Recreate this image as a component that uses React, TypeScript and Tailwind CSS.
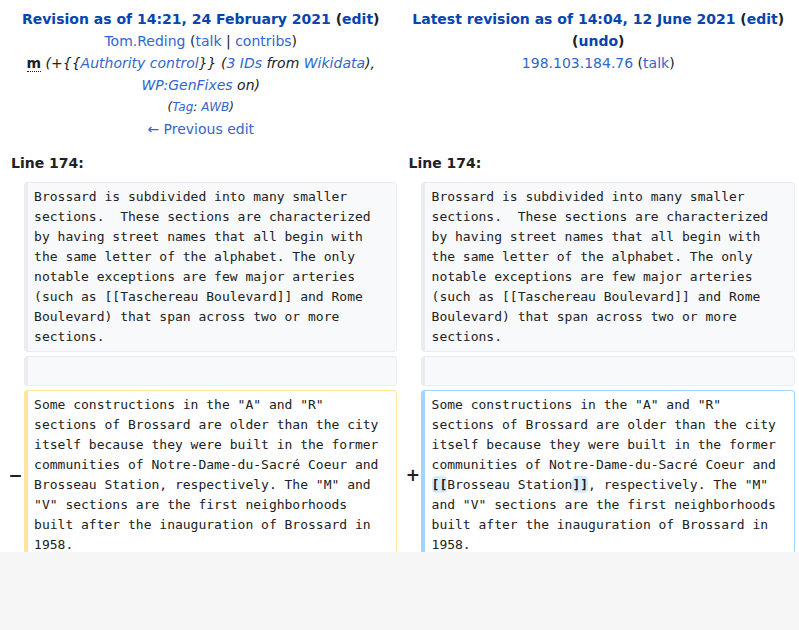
const link = "text-[#3366cc]"

function Marker({ sign }: { sign?: string }) {
  return (
    <td className="align-middle text-right font-bold text-[17px] leading-[1.2] text-[#202122] font-['DejaVu_Sans',sans-serif]">
      <span className="relative left-[3px]">{sign}</span>
    </td>
  )
}

function Cell({ kind, children }: { kind: "context" | "del" | "add"; children?: React.ReactNode }) {
  const tone =
    kind === "context"
      ? "bg-[#f8f9fa] border-[#eaecf0]"
      : kind === "del"
        ? "bg-white border-[#ffe49c]"
        : "bg-white border-[#a3d3ff]"
  return (
    <td
      className={`${tone} align-top border border-l-4 rounded-[4px] px-[6.5px] py-[4px] font-['DejaVu_Sans_Mono',monospace] text-[13px] leading-[20px] text-[#202122] whitespace-pre-wrap break-words`}
    >
      {children ?? <br />}
    </td>
  )
}

const contextText =
  "Brossard is subdivided into many smaller sections.  These sections are characterized by having street names that all begin with the same letter of the alphabet. The only notable exceptions are few major arteries (such as [[Taschereau Boulevard]] and Rome Boulevard) that span across two or more sections."

export default function App() {
  return (
    <div className="min-h-screen bg-[#f6f6f6]">
      <div className="h-[552px] overflow-hidden bg-white">
        <table className="w-full table-fixed border-separate border-spacing-[4px] font-['DejaVu_Sans',sans-serif] text-[#202122]">
          <colgroup>
            <col className="w-[2%]" />
            <col className="w-[48%]" />
            <col className="w-[2%]" />
            <col className="w-[48%]" />
          </colgroup>
          <tbody>
            <tr className="text-[14px] leading-[22px]">
              <td colSpan={2} className="align-top text-center py-[4px]">
                <div className="font-bold">
                  <a className="text-[#0645ad]">Revision as of 14:21, 24 February 2021</a> (
                  <a className="text-[#0645ad]">edit</a>)
                </div>
                <div>
                  <a className={link}>Tom.Reding</a> (<a className={link}>talk</a> |{" "}
                  <a className={link}>contribs</a>)
                </div>
                <div>
                  <abbr className="font-bold no-underline border-b border-dotted border-[#202122]">m</abbr>{" "}
                  <span className="italic text-[#202122]">
                    (+&#123;&#123;<a className={link}>Authority control</a>&#125;&#125; (
                    <a className={link}>3 IDs</a> from <a className={link}>Wikidata</a>),{" "}
                    <a className={link}>WP:GenFixes</a> on)
                  </span>
                </div>
                <div className="italic text-[12px]">
                  (<a className={link}>Tag</a>: <a className={link}>AWB</a>)
                </div>
                <div>
                  <a className={link}>← Previous edit</a>
                </div>
              </td>
              <td colSpan={2} className="align-top text-center py-[4px]">
                <div className="font-bold">
                  <a className="text-[#0645ad]">Latest revision as of 14:04, 12 June 2021</a> (
                  <a className="text-[#0645ad]">edit</a>) (<a className="text-[#0645ad]">undo</a>)
                </div>
                <div>
                  <a className={link}>198.103.184.76</a> (<a className={link}>talk</a>)
                </div>
              </td>
            </tr>
            <tr className="text-[14px] leading-[22px] font-bold">
              <td colSpan={2} className="px-[7px] py-[4px] text-left">
                Line 174:
              </td>
              <td colSpan={2} className="px-[7px] py-[4px] text-left">
                Line 174:
              </td>
            </tr>
            <tr>
              <Marker />
              <Cell kind="context">{contextText}</Cell>
              <Marker />
              <Cell kind="context">{contextText}</Cell>
            </tr>
            <tr>
              <Marker />
              <Cell kind="context" />
              <Marker />
              <Cell kind="context" />
            </tr>
            <tr>
              <Marker sign="−" />
              <Cell kind="del">
                Some constructions in the "A" and "R" sections of Brossard are older than the city itself because they were built in the former communities of Notre-Dame-du-Sacré Coeur and Brosseau Station, respectively. The "M" and "V" sections are the first neighborhoods built after the inauguration of Brossard in 1958.
              </Cell>
              <Marker sign="+" />
              <Cell kind="add">
                Some constructions in the "A" and "R" sections of Brossard are older than the city itself because they were built in the former communities of Notre-Dame-du-Sacré Coeur and{" "}
                <span className="font-bold bg-[#d8ecff] rounded-[4px] py-[1px]">[[</span>Brosseau Station
                <span className="font-bold bg-[#d8ecff] rounded-[4px] py-[1px]">]]</span>, respectively. The "M" and "V" sections are the first neighborhoods built after the inauguration of Brossard in 1958.
              </Cell>
            </tr>
          </tbody>
        </table>
      </div>
    </div>
  )
}
